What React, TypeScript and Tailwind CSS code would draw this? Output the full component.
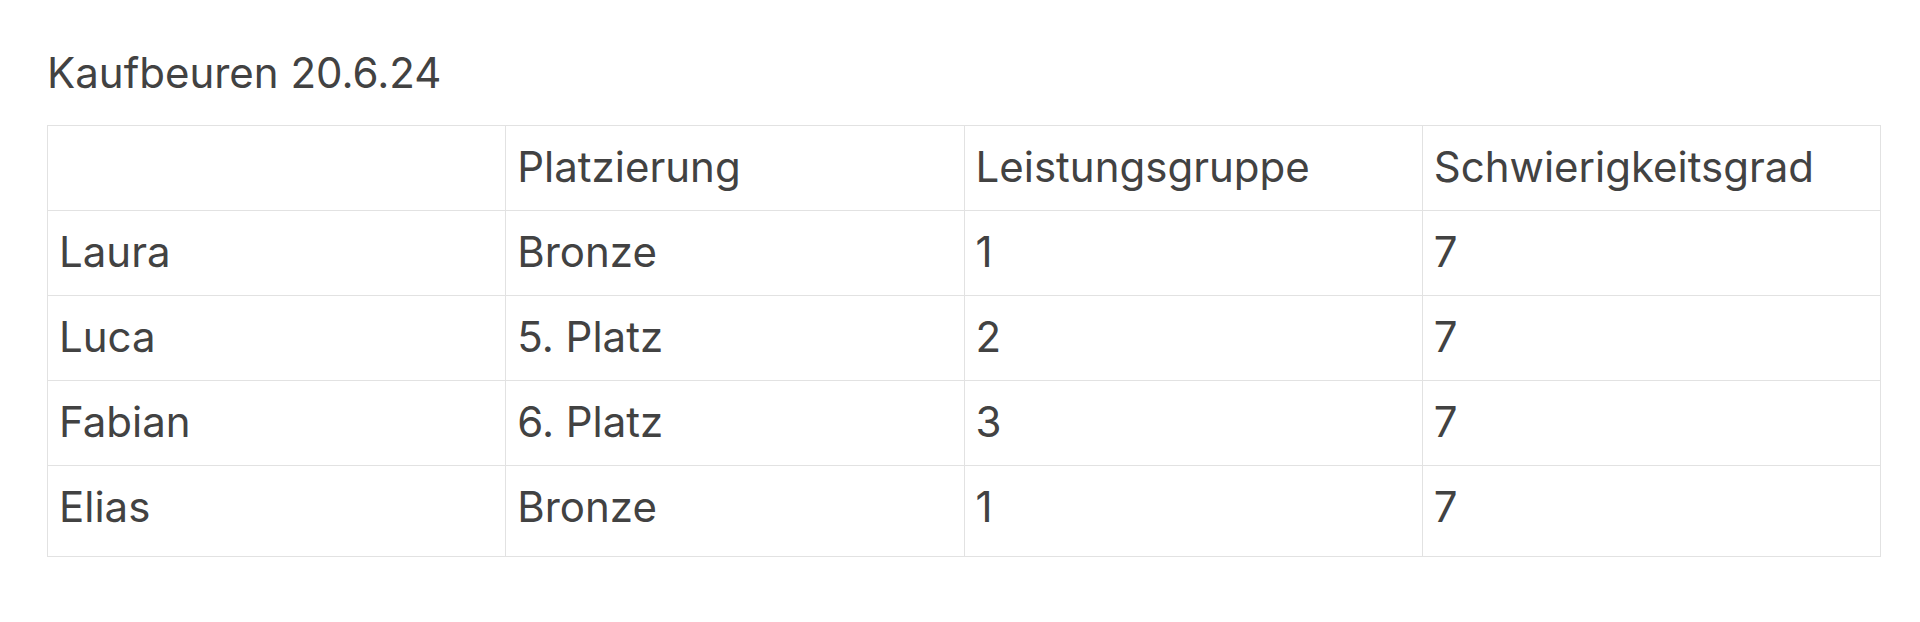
const rows = [
  ['Laura', 'Bronze', '1', '7'],
  ['Luca', '5. Platz', '2', '7'],
  ['Fabian', '6. Platz', '3', '7'],
  ['Elias', 'Bronze', '1', '7'],
];

const head = ['', 'Platzierung', 'Leistungsgruppe', 'Schwierigkeitsgrad'];

export default function App() {
  return (
    <div
      className="h-[622px] w-[1920px] bg-white px-[47px] pt-[50px] text-[#424242]"
      style={{ fontFamily: 'Inter, "Noto Sans", sans-serif' }}
    >
      <h1 className="text-[42px] leading-[46px] font-normal">Kaufbeuren 20.6.24</h1>
      <table className="mt-[29px] w-[1834px] table-fixed border-collapse text-[42px]">
        <tbody>
          <tr className="h-[85px]">
            {head.map((h, i) => (
              <td key={i} className="border border-[#e2e2e2] px-[11px] pb-[3px] align-middle">
                {h}
              </td>
            ))}
          </tr>
          {rows.map((r, ri) => {
            const last = ri === rows.length - 1;
            return (
              <tr key={ri} className={last ? 'h-[91px]' : 'h-[85px]'}>
                {r.map((c, ci) => (
                  <td
                    key={ci}
                    className={`border border-[#e2e2e2] px-[11px] align-middle ${last ? 'pb-[9px]' : 'pb-[3px]'}`}
                  >
                    {c}
                  </td>
                ))}
              </tr>
            );
          })}
        </tbody>
      </table>
    </div>
  );
}
